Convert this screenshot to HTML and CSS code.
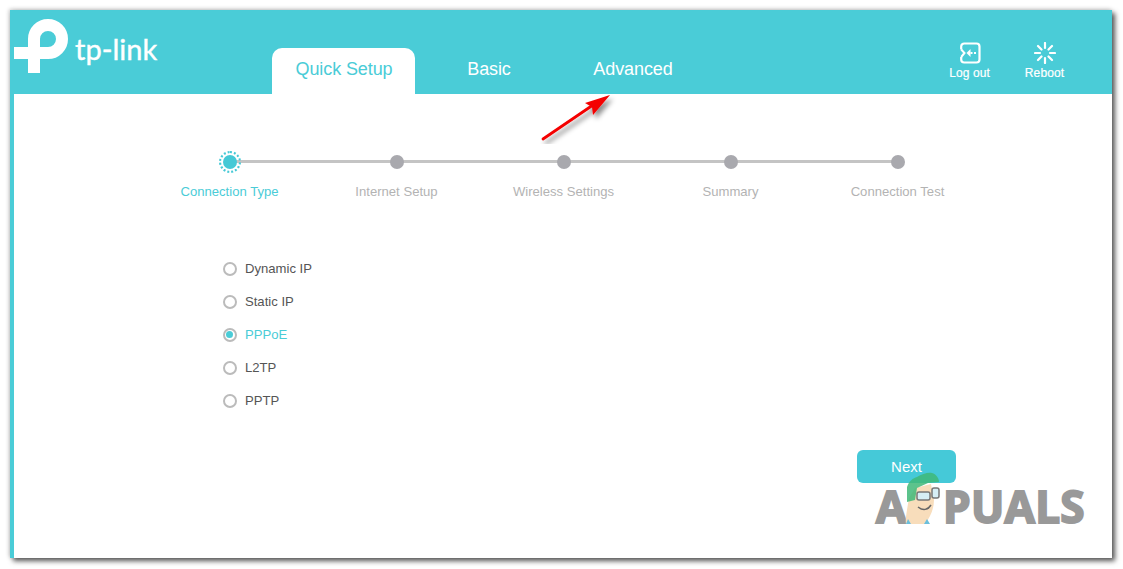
FILE: index.html
```html
<!DOCTYPE html>
<html lang="en">
<head>
<meta charset="utf-8">
<title>TP-Link Quick Setup</title>
<link rel="stylesheet" href="styles.css">
</head>
<body>
<div class="window">
  <header class="topbar">
    <div class="brand">
      <svg class="brand-mark" viewBox="0 0 56 56" width="56" height="56" aria-hidden="true">
        <path d="M20 54 V20 A14 14 0 1 1 34 34 H0" fill="none" stroke="#fff" stroke-width="12"/>
      </svg>
      <span class="brand-name">tp-link</span>
    </div>
    <nav class="tabs">
      <a class="tab active">Quick Setup</a>
      <a class="tab basic">Basic</a>
      <a class="tab advanced">Advanced</a>
    </nav>
    <div class="actions">
      <div class="action logout">
        <svg viewBox="0 0 22 22" width="22" height="22" aria-hidden="true">
          <path d="M2.200 7.500 V4.500 A3 3 0 0 1 5.200 1.500 H17.500 A3 3 0 0 1 20.500 4.500 V17.500 A3 3 0 0 1 17.500 20.500 H5.200 A3 3 0 0 1 2.200 17.500 V15" fill="none" stroke="#fff" stroke-width="2.200"/>
          <path d="M2.200 7.500 L5.500 11 L2.200 15" fill="none" stroke="#fff" stroke-width="2"/>
          <path d="M11.500 7 L7.500 11 L11.500 15 Z" fill="#fff"/>
          <path d="M11.500 11 H13.500 M15 11 H17" stroke="#fff" stroke-width="2"/>
        </svg>
        <span>Log out</span>
      </div>
      <div class="action reboot">
        <svg viewBox="0 0 22 22" width="22" height="22" aria-hidden="true">
          <g stroke="#fff" stroke-width="2.200" stroke-linecap="round">
            <path d="M11 1 V6 M11 16 V21 M1 11 H6 M16 11 H21 M4 4 L7.500 7.500 M14.500 14.500 L18 18 M18 4 L14.500 7.500 M7.500 14.500 L4 18"/>
          </g>
        </svg>
        <span>Reboot</span>
      </div>
    </div>
  </header>
  <main class="content">
    <ol class="steps">
      <li class="step current"><span class="dot"></span><span class="step-label">Connection Type</span></li>
      <li class="step"><span class="dot"></span><span class="step-label">Internet Setup</span></li>
      <li class="step"><span class="dot"></span><span class="step-label">Wireless Settings</span></li>
      <li class="step"><span class="dot"></span><span class="step-label">Summary</span></li>
      <li class="step last"><span class="dot"></span><span class="step-label">Connection Test</span></li>
    </ol>
    <ul class="options">
      <li class="option"><span class="radio"></span>Dynamic IP</li>
      <li class="option"><span class="radio"></span>Static IP</li>
      <li class="option selected"><span class="radio"></span>PPPoE</li>
      <li class="option"><span class="radio"></span>L2TP</li>
      <li class="option"><span class="radio"></span>PPTP</li>
    </ul>
    <div class="footer-row"><button class="next">Next</button></div>
  </main>
</div>
<svg class="arrow" viewBox="0 0 80 50" width="80" height="50" aria-hidden="true">
  <defs><filter id="sh" x="-20%" y="-20%" width="150%" height="160%"><feDropShadow dx="3" dy="4" stdDeviation="2.500" flood-color="#000" flood-opacity=".45"/></filter></defs>
  <g filter="url(#sh)">
    <path d="M3 45 L53 11" stroke="#f40000" stroke-width="2.800" stroke-linecap="round"/>
    <path d="M70 1 L45 9 L52 13 L53 21 Z" fill="#f40000"/>
  </g>
</svg>
<div class="watermark">
  <span class="wm-a">A</span>
  <svg class="wm-face" viewBox="0 0 42 52" width="42" height="52" aria-hidden="true">
    <path d="M8 26 C6 38 4 48 5 52 L24 52 C30 44 33 36 33 28 L30 12 L14 16 Z" fill="#f8ddbb"/>
    <path d="M6 30 L6 15 C8 9 12 6 16 5 C21 2 27 0 31 1 C35 2 38 6 38 10 L27 11 L16 16 L14 28 Z" fill="#3fb878" fill-opacity=".85"/>
    <rect x="16" y="20" width="13" height="8" rx="2" fill="#d6eef5" stroke="#777" stroke-width="1.500"/>
    <rect x="31" y="16" width="7" height="10" rx="2" fill="#d6eef5" stroke="#777" stroke-width="1.500"/>
    <path d="M17 35 C22 39 27 38 30 33" stroke="#666" stroke-width="1.500" fill="none"/>
    <path d="M5 52 L7 47 L10 52 Z M23 52 L26 47 L29 52 Z" fill="#6bbfdc"/>
  </svg>
  <span class="wm-rest">PUALS</span>
</div>
</body>
</html>
```

FILE: styles.css
```css
* { box-sizing: border-box; }
html, body { margin: 0; height: 100%; }
body {
  background: #fff;
  font-family: "Liberation Sans", Arial, sans-serif;
  overflow: hidden;
  padding: 10px 11px 11px 10px;
}
.window {
  height: 548px;
  background: #fff;
  border-left: 4px solid #4accd7;
  box-shadow: 3px 3px 5px #555, -1px -1px 4px #ccc;
  display: flex;
  flex-direction: column;
}
.topbar {
  height: 84px;
  margin-left: -4px;
  background: #4accd7;
  display: flex;
  color: #fff;
}
.brand {
  width: 262px;
  display: flex;
  align-items: flex-start;
  padding: 9px 0 0 4px;
}
.brand-name {
  font-family: "Lato", sans-serif;
  font-size: 29px;
  line-height: 36px;
  margin: 12px 0 0 5px;
  -webkit-text-stroke: .4px #fff;
}
.tabs {
  display: flex;
  align-self: flex-end;
  height: 46px;
  font-size: 18px;
  letter-spacing: -.1px;
}
.tab {
  display: flex;
  align-items: center;
  justify-content: center;
  height: 43px;
  color: #fff;
}
.tab.active {
  width: 143px;
  height: 46px;
  padding: 0 0 3px 1px;
  background: #fff;
  color: #4accd7;
  border-radius: 10px 10px 0 0;
}
.tab.basic { width: 148px; }
.tab.advanced { width: 140px; }
.actions {
  margin-left: auto;
  display: flex;
  padding: 32px 30px 0 0;
}
.action {
  width: 75px;
  display: flex;
  flex-direction: column;
  align-items: center;
  font-size: 12px;
  line-height: 14px;
  gap: 2px;
  -webkit-text-stroke: .2px #fff;
  letter-spacing: .1px;
}
.content {
  flex: 1;
  position: relative;
  display: flex;
  flex-direction: column;
}
.steps {
  list-style: none;
  margin: 0;
  padding: 57px 0 0 132px;
  display: grid;
  grid-template-columns: repeat(5, 167px);
}
.step {
  position: relative;
  display: flex;
  flex-direction: column;
  align-items: center;
  gap: 19px;
}
.step::after {
  content: "";
  position: absolute;
  left: 50%;
  width: 100%;
  top: 9px;
  height: 3px;
  background: #c4c4c4;
}
.step.last::after { display: none; }
.dot {
  position: relative;
  z-index: 1;
  width: 14px;
  height: 14px;
  margin: 4px 0 0;
  border-radius: 50%;
  background: #a9a9ae;
}
.step.current .dot { background: #45c9d6; }
.step.current .dot::before {
  content: "";
  position: absolute;
  inset: -4px;
  border-radius: 50%;
  border: 2px dotted #45c9d6;
}
.step-label {
  font-size: 13.100px;
  line-height: 16px;
  color: #b3b3b3;
  margin-top: -4px;
}
.step.current .step-label { color: #4accd7; }
.options {
  list-style: none;
  margin: 0;
  padding: 52px 0 0 208.500px;
}
.option {
  height: 33px;
  display: flex;
  align-items: center;
  gap: 8.500px;
  font-size: 13.100px;
  color: #555;
}
.option.selected { color: #4accd7; }
.radio {
  width: 14px;
  height: 14px;
  border-radius: 50%;
  border: 2px solid #bbb;
  background: #fff;
  position: relative;
}
.option.selected .radio::after {
  content: "";
  position: absolute;
  inset: 1.500px;
  border-radius: 50%;
  background: #4accd7;
}
.footer-row {
  display: flex;
  justify-content: flex-end;
  padding: 33px 156px 0 0;
}
.next {
  width: 99px;
  height: 33px;
  border: 0;
  border-radius: 6px;
  background: #45c9d8;
  color: #fff;
  font: 15px "Liberation Sans", Arial, sans-serif;
}
.arrow {
  position: absolute;
  left: 540px;
  top: 94px;
}
.watermark {
  position: absolute;
  left: 876px;
  top: 472px;
  display: flex;
  align-items: flex-end;
  height: 52px;
  color: #999;
  font-family: "Open Sans", sans-serif;
  font-weight: 700;
  font-size: 44px;
  line-height: 36px;
  -webkit-text-stroke: 2px #999;
}
.wm-a { width: 27px; }
.wm-face { margin: 0 0 0 -2px; }
.wm-rest { letter-spacing: .3px; }
```
